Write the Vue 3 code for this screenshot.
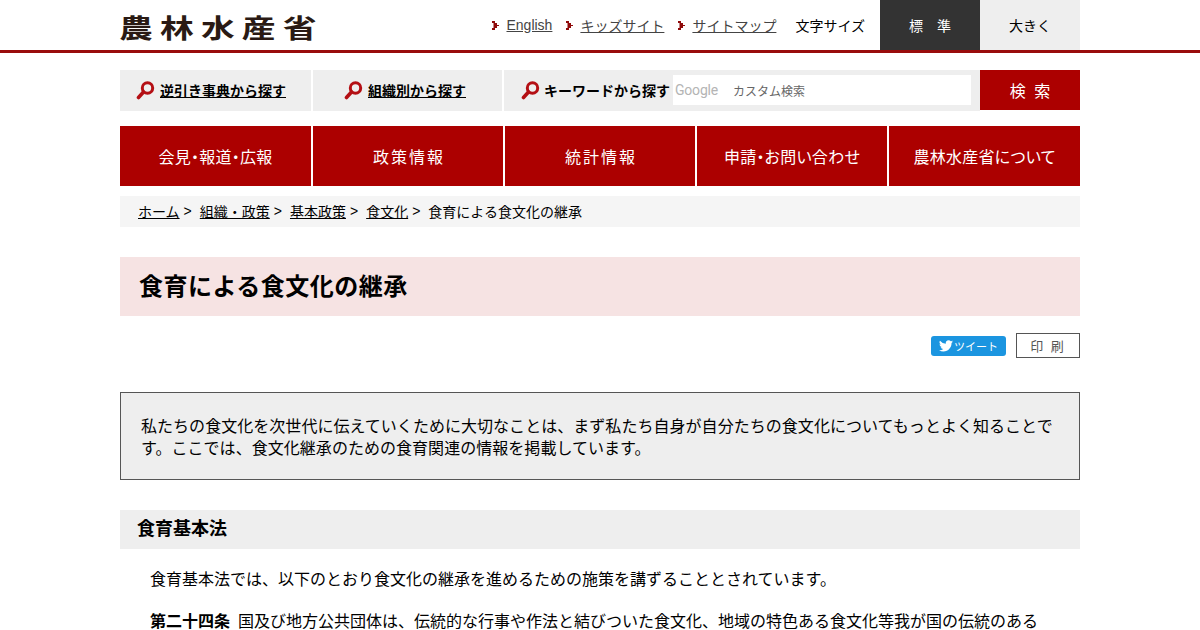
<script setup>
const topLinks = ['English', 'キッズサイト', 'サイトマップ']
const navItems = [
  { label: '会見・報道・広報', spaced: false },
  { label: '政策情報', spaced: true },
  { label: '統計情報', spaced: true },
  { label: '申請・お問い合わせ', spaced: false },
  { label: '農林水産省について', spaced: false }
]
const crumbs = ['ホーム', '組織・政策', '基本政策', '食文化']
</script>

<template>
  <div class="page">
    <header class="header">
      <div class="header-inner">
        <div class="logo"><span class="logo-text">農林水産省</span></div>
        <div class="header-right">
          <a v-for="l in topLinks" :key="l" class="top-link">
            <svg class="chev" width="7" height="9" viewBox="0 0 7 9"><path d="M0 0h3v2h2v2h2v1H5v2H3v2H0V7h1.500V2H0z" fill="#8f0a0a" /></svg>
            <span>{{ l }}</span>
          </a>
          <span class="size-label">文字サイズ</span>
          <span class="size-btn dark">標　準</span>
          <span class="size-btn light">大きく</span>
        </div>
      </div>
    </header>

    <main class="wrap">
      <div class="search-row">
        <a class="search-cell first">
          <svg class="lens" width="19" height="19" viewBox="0 0 19 19"><circle cx="11.500" cy="7" r="5.200" fill="none" stroke="#b40f14" stroke-width="3" /><path d="M7.500 11 2.500 16.500" stroke="#b40f14" stroke-width="3.600" stroke-linecap="round" /></svg>
          <span class="search-link">逆引き事典から探す</span>
        </a>
        <a class="search-cell second">
          <svg class="lens" width="19" height="19" viewBox="0 0 19 19"><circle cx="11.500" cy="7" r="5.200" fill="none" stroke="#b40f14" stroke-width="3" /><path d="M7.500 11 2.500 16.500" stroke="#b40f14" stroke-width="3.600" stroke-linecap="round" /></svg>
          <span class="search-link">組織別から探す</span>
        </a>
        <div class="search-cell keyword">
          <svg class="lens" width="19" height="19" viewBox="0 0 19 19"><circle cx="11.500" cy="7" r="5.200" fill="none" stroke="#b40f14" stroke-width="3" /><path d="M7.500 11 2.500 16.500" stroke="#b40f14" stroke-width="3.600" stroke-linecap="round" /></svg>
          <span class="kw-label">キーワードから探す</span>
          <div class="search-input">
            <span class="google">Google</span>
            <span class="placeholder">カスタム検索</span>
          </div>
        </div>
        <button class="search-btn">検 索</button>
      </div>

      <nav class="nav">
        <a v-for="n in navItems" :key="n.label" class="nav-item" :class="{ spaced: n.spaced }">{{ n.label }}</a>
      </nav>

      <div class="crumbs">
        <template v-for="c in crumbs" :key="c">
          <a class="crumb">{{ c }}</a><span class="sep">&gt;</span>
        </template>
        <span>食育による食文化の継承</span>
      </div>

      <h1 class="title">食育による食文化の継承</h1>

      <div class="tools">
        <span class="tweet">
          <svg width="14" height="12" viewBox="0 0 24 20"><path fill="#fff" d="M24 2.400a9.800 9.800 0 0 1-2.800.8A4.900 4.900 0 0 0 23.300.5a9.800 9.800 0 0 1-3.100 1.200 4.900 4.900 0 0 0-8.400 4.500A14 14 0 0 1 1.700.9a4.900 4.900 0 0 0 1.500 6.600 4.900 4.900 0 0 1-2.200-.6c0 2.400 1.700 4.400 3.900 4.900a4.900 4.900 0 0 1-2.200.1 4.900 4.900 0 0 0 4.600 3.400A9.900 9.900 0 0 1 0 17.300 14 14 0 0 0 7.500 19.500c9.100 0 14.300-7.700 14-14.600A10 10 0 0 0 24 2.400z" /></svg>
          <span>ツイート</span>
        </span>
        <span class="print">印 刷</span>
      </div>

      <div class="lead">私たちの食文化を次世代に伝えていくために大切なことは、まず私たち自身が自分たちの食文化についてもっとよく知ることです。ここでは、食文化継承のための食育関連の情報を掲載しています。</div>

      <h2 class="section">食育基本法</h2>

      <div class="body">
        <p>食育基本法では、以下のとおり食文化の継承を進めるための施策を講ずることとされています。</p>
        <p class="article"><b class="art">第二十四条</b>国及び地方公共団体は、伝統的な行事や作法と結びついた食文化、地域の特色ある食文化等我が国の伝統のある</p>
      </div>
    </main>
  </div>
</template>

<style>
html, body { margin: 0; background: #fff; overflow: hidden; }
</style>

<style scoped>
.page {
  height: 630px;
  overflow: hidden;
  font-family: "Liberation Sans", "Noto Sans CJK JP", sans-serif;
  font-size: 16px;
  color: #000;
}
.header { height: 50px; border-bottom: 3px solid #990c0c; }
.header-inner {
  width: 960px; height: 50px; margin: 0 auto;
  display: flex; justify-content: space-between;
}
.logo {
  width: 195px; height: 50px; white-space: nowrap;
  font-family: "Noto Sans CJK JP", sans-serif;
}
.logo-text {
  display: block; font-size: 26px; font-weight: 700; letter-spacing: 5.500px; color: #2a1a14;
  line-height: 54px; margin-left: -1px; transform: scaleX(1.3); transform-origin: left center;
}
.header-right { display: flex; align-items: center; font-size: 14px; }
.top-link { display: flex; align-items: center; color: #444; margin-right: 14px; }
.top-link span { text-decoration: underline; margin-left: 7px; }
.chev { flex: none; }
.size-label { color: #000; margin: 0 15px 0 5px; }
.size-btn { width: 100px; height: 50px; display: flex; align-items: center; justify-content: center; }
.size-btn.dark { background: #333; color: #fff; }
.size-btn.light { background: #eee; color: #000; }

.wrap { width: 960px; margin: 0 auto; }
.search-row { display: flex; margin-top: 17px; height: 41px; }
.search-cell {
  background: #eee; height: 41px; display: flex; align-items: center; flex: none;
  font-size: 14px; font-weight: 700; box-sizing: border-box; padding-bottom: 1px;
}
.first { width: 191px; margin-right: 2px; padding-left: 16px; }
.second { width: 189px; margin-right: 2px; padding-left: 31px; }
.keyword { width: 476px; padding-left: 17px; }
.lens { flex: none; margin-right: 5px; }
.keyword .lens { margin-right: 4px; }
.search-link { text-decoration: underline; }
.kw-label { white-space: nowrap; }
.search-input {
  width: 298px; height: 30px; background: #fff; margin-left: 3px;
  display: flex; align-items: center; flex: none; font-weight: 400;
}
.google { color: #b4b4b4; font-family: Roboto, sans-serif; font-size: 14px; margin-left: 2px; width: 58px; letter-spacing: -0.2px; }
.placeholder { color: #666; font-size: 12px; }
.search-btn {
  width: 100px; height: 40px; border: 0; background: #ac0000; color: #fff;
  font: inherit; letter-spacing: 2px; text-indent: 2px; flex: none; padding: 0;
}
.nav { display: grid; grid-template-columns: 191px 190px 190px 190px 191px; gap: 2px; margin-top: 15px; }
.nav-item {
  height: 60px; background: #ac0000; color: #fff; font-feature-settings: "palt"; letter-spacing: 0.25px;
  display: flex; align-items: center; justify-content: center; white-space: nowrap;
}
.nav-item.spaced { letter-spacing: 2px; padding-left: 2px; }
.crumbs {
  margin-top: 10px; height: 31px; background: #f5f5f5; padding: 0 0 2px 18px; box-sizing: border-box;
  display: flex; align-items: center; font-size: 14px;
}
.crumb { text-decoration: underline; }
.sep { margin: 0 8px 0 4px; }
.title {
  margin: 30px 0 0; height: 59px; background: #f6e3e3; padding-left: 19px;
  font-size: 24px; font-weight: 700; line-height: 59px; letter-spacing: 0.5px;
}
.tools { display: flex; justify-content: flex-end; align-items: center; gap: 10px; margin-top: 17px; height: 25px; }
.tweet {
  width: 75px; height: 20px; background: #1b95e0; color: #fff; border-radius: 3px;
  font-size: 11px; display: flex; align-items: center; justify-content: center; gap: 1px;
}
.print {
  width: 64px; height: 25px; box-sizing: border-box; border: 1px solid #555; color: #555;
  font-size: 13px; letter-spacing: 2px; display: flex; align-items: center; justify-content: center;
}
.lead {
  margin-top: 34px; height: 88px; box-sizing: border-box; border: 1px solid #555; background: #eee;
  padding: 23px 20px 0; line-height: 22px; letter-spacing: 0.04px;
}
.section {
  margin: 30px 0 0; height: 39px; background: #eee; padding-left: 17px;
  font-size: 18px; font-weight: 700; line-height: 39px;
}
.body { padding: 0 30px; }
.body p { margin: 19px 0 0; line-height: 24px; }
.body .article { margin-top: 18px; }
.art { margin-right: 8px; }
</style>
